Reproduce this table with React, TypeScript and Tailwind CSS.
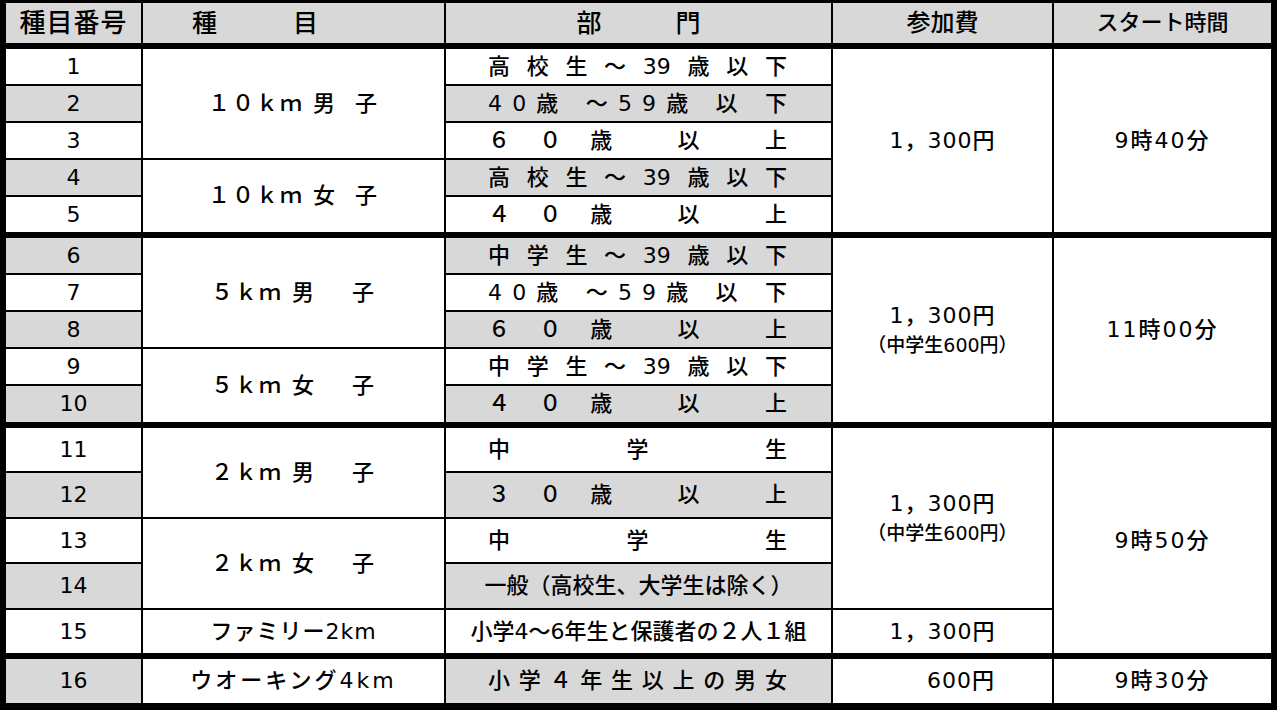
import type { ReactNode } from "react";

const COLS = "grid grid-cols-[135px_301px_385px_219px_217px] gap-[2px]";
const SP = "\u00a0";

type CellProps = { gray?: boolean; className?: string; children?: ReactNode };

function Cell({ gray = false, className = "", children }: CellProps) {
  return (
    <div className={`flex items-center leading-none text-black ${gray ? "bg-[#d8d8d8]" : "bg-white"} ${className}`}>
      {children}
    </div>
  );
}

function Num({ n }: { n: number }) {
  return (
    <Cell gray={n % 2 === 0} className="justify-center text-[22px]">
      {n}
    </Cell>
  );
}

// Excel "distributed" alignment: every piece spread across the cell
function Spread({ items, gray = false }: { items: string[]; gray?: boolean }) {
  return (
    <Cell gray={gray} className="justify-between pl-[42px] pr-[44px] text-[22px]">
      {items.map((t, i) => (
        <span key={i} className="whitespace-pre">
          {t}
        </span>
      ))}
    </Cell>
  );
}

const upTo39 = (a: string, b: string) => [a, b, "生", "～", "39", "歳", "以", "下"];
const from40 = ["4", "0", "歳", SP, "～", "5", "9", "歳", SP, "以", SP, "下"];
const over = (a: string, b: string) => [a, b, "歳", SP, "以", SP, "上"];
const chugaku = ["中", "学", "生"];

function Event({ text, span = "" }: { text: string; span?: string }) {
  return (
    <Cell className={`${span} justify-center whitespace-pre text-[22px] tracking-[2px]`}>
      {text}
    </Cell>
  );
}

function Fee({ span, junior = false }: { span: string; junior?: boolean }) {
  return (
    <Cell className={`${span} flex-col justify-center gap-[9px]`}>
      <span className="text-[22px] tracking-[1px]">1，300円</span>
      {junior && <span className="text-[19px]">（中学生600円）</span>}
    </Cell>
  );
}

function Start({ text, span = "" }: { text: string; span?: string }) {
  return <Cell className={`${span} justify-center text-[22px] tracking-[2px]`}>{text}</Cell>;
}

export default function App() {
  return (
    <div className="w-[1280px] h-[714px] bg-white font-medium font-['DejaVu_Sans','Noto_Sans_CJK_JP',sans-serif]">
      <div className="w-[1277px] bg-black pt-[3px] pl-[6px] pr-[6px] pb-[7px] flex flex-col gap-[6px]">
        {/* header */}
        <div className={`${COLS} grid-rows-[40px]`}>
          <Cell gray className="justify-center text-[26px] tracking-[1px]">種目番号</Cell>
          <Cell gray className="justify-start gap-[76px] pl-[49px] text-[25px]">
            <span>種</span>
            <span>目</span>
          </Cell>
          <Cell gray className="justify-center gap-[74px] text-[25px]">
            <span>部</span>
            <span>門</span>
          </Cell>
          <Cell gray className="justify-center text-[24px]">参加費</Cell>
          <Cell gray className="justify-center text-[22px]">スタート時間</Cell>
        </div>

        {/* 10km */}
        <div className={`${COLS} grid-rows-[35px_35px_35px_35px_35px]`}>
          <Num n={1} />
          <Event span="row-span-3" text="１０ｋｍ 男  子" />
          <Spread items={upTo39("高", "校")} />
          <Fee span="row-span-5" />
          <Start span="row-span-5" text="9時40分" />
          <Num n={2} />
          <Spread gray items={from40} />
          <Num n={3} />
          <Spread items={over("６", "０")} />
          <Num n={4} />
          <Event span="row-span-2" text="１０ｋｍ 女  子" />
          <Spread gray items={upTo39("高", "校")} />
          <Num n={5} />
          <Spread items={over("４", "０")} />
        </div>

        {/* 5km */}
        <div className={`${COLS} grid-rows-[35px_35px_35px_35px_36px]`}>
          <Num n={6} />
          <Event span="row-span-3" text="５ｋｍ 男    子" />
          <Spread gray items={upTo39("中", "学")} />
          <Fee span="row-span-5" junior />
          <Start span="row-span-5" text="11時00分" />
          <Num n={7} />
          <Spread items={from40} />
          <Num n={8} />
          <Spread gray items={over("６", "０")} />
          <Num n={9} />
          <Event span="row-span-2" text="５ｋｍ 女    子" />
          <Spread items={upTo39("中", "学")} />
          <Num n={10} />
          <Spread gray items={over("４", "０")} />
        </div>

        {/* 2km */}
        <div className={`${COLS} grid-rows-[43px_44px_43px_44px_43px]`}>
          <Num n={11} />
          <Event span="row-span-2" text="２ｋｍ 男    子" />
          <Spread items={chugaku} />
          <Fee span="row-span-4" junior />
          <Start span="row-span-5" text="9時50分" />
          <Num n={12} />
          <Spread gray items={over("３", "０")} />
          <Num n={13} />
          <Event span="row-span-2" text="２ｋｍ 女    子" />
          <Spread items={chugaku} />
          <Num n={14} />
          <Cell gray className="justify-center text-[22px]">一般（高校生、大学生は除く）</Cell>
          <Num n={15} />
          <Cell className="justify-center text-[22px] tracking-[1px]">ファミリー2km</Cell>
          <Cell className="justify-center text-[22px]">小学4～6年生と保護者の２人１組</Cell>
          <Fee span="" />
        </div>

        {/* walking */}
        <div className={`${COLS} grid-rows-[44px]`}>
          <Num n={16} />
          <Cell className="justify-center text-[22px] tracking-[3px]">ウオーキング4km</Cell>
          <Spread gray items={[..."小学４年生以上の男女"]} />
          <Cell className="justify-end pr-[57px] text-[22px] tracking-[1px]">600円</Cell>
          <Start text="9時30分" />
        </div>
      </div>
    </div>
  );
}
